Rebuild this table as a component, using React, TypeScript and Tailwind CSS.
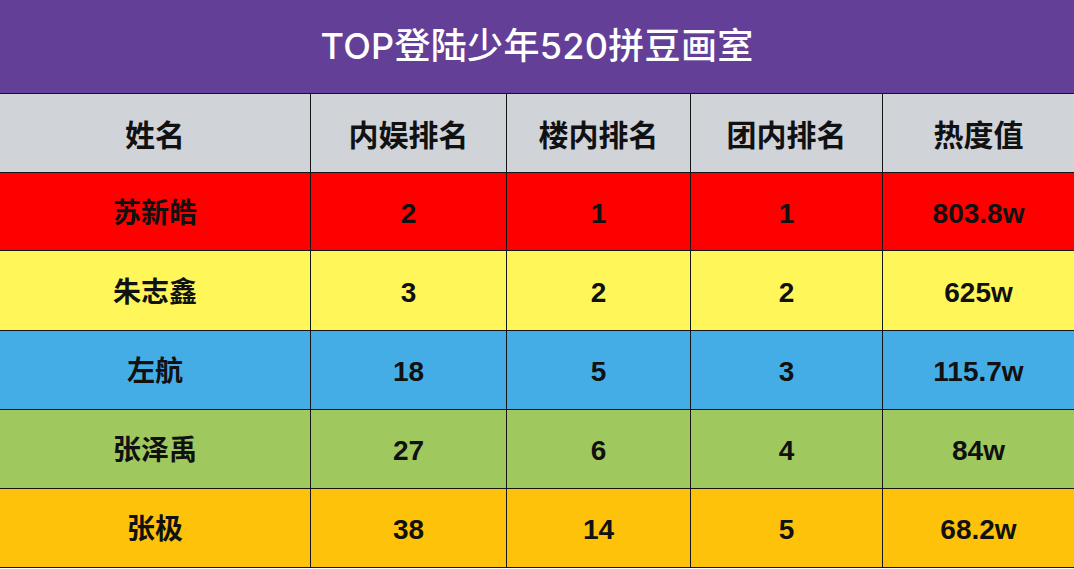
import React from "react";

const rows = [
  { name: "苏新皓", a: "2", b: "1", c: "1", d: "803.8w", bg: "bg-[#ff0000]", h: "h-[78px]" },
  { name: "朱志鑫", a: "3", b: "2", c: "2", d: "625w", bg: "bg-[#fff75a]", h: "h-[80px]" },
  { name: "左航", a: "18", b: "5", c: "3", d: "115.7w", bg: "bg-[#45ade6]", h: "h-[79px]" },
  { name: "张泽禹", a: "27", b: "6", c: "4", d: "84w", bg: "bg-[#9fc95e]", h: "h-[79px]" },
  { name: "张极", a: "38", b: "14", c: "5", d: "68.2w", bg: "bg-[#ffc20a]", h: "h-[79px]" },
];

const cols = "grid grid-cols-[311px_196px_184px_192px_1fr]";
const cell = "flex items-center justify-center border-r border-[#161616] h-full pt-[4px]";
const last = "flex items-center justify-center h-full pt-[4px]";
const font = { fontFamily: '"Liberation Sans", "Noto Sans CJK SC", sans-serif' };
const titleFont = { fontFamily: 'Inter, "Noto Sans CJK SC", sans-serif' };

export default function App() {
  return (
    <div className="w-[1074px] h-[569px] bg-white overflow-hidden" style={font}>
      <div className="h-[94px] bg-[#643f97] border-b border-[#161616] flex items-center justify-center pb-[2px]">
        <span className="text-white text-[36px] font-medium tracking-[0.3px]" style={titleFont}>TOP登陆少年520拼豆画室</span>
      </div>
      <div className={`${cols} h-[79px] bg-[#d0d4d9] border-b border-[#161616] text-[30px] font-bold text-[#111]`}>
        <div className={cell}>姓名</div>
        <div className={cell}>内娱排名</div>
        <div className={cell}>楼内排名</div>
        <div className={cell}>团内排名</div>
        <div className={last}>热度值</div>
      </div>
      {rows.map((r) => (
        <div key={r.name} className={`${cols} ${r.h} ${r.bg} border-b border-[#161616] text-[28px] font-bold text-[#111]`}>
          <div className={cell}>{r.name}</div>
          <div className={cell}>{r.a}</div>
          <div className={cell}>{r.b}</div>
          <div className={cell}>{r.c}</div>
          <div className={last}>{r.d}</div>
        </div>
      ))}
    </div>
  );
}
